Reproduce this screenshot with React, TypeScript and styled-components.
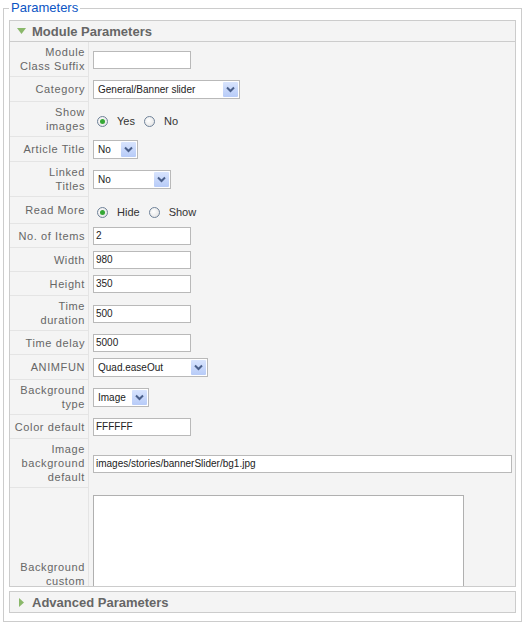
import React from 'react';
import styled, {createGlobalStyle} from 'styled-components';

const GlobalStyle = createGlobalStyle`
  html, body {
    margin: 0;
    padding: 0;
    background: #fff;
  }
  body {
    font-family: "Liberation Sans", Arial, Helvetica, sans-serif;
    font-size: 11px;
    color: #333;
  }
`;

const Page = styled.div`
  width: 524px;
  padding: 1px 3px 0 3px;
  box-sizing: border-box;
`;

const Fieldset = styled.fieldset`
  margin: 0;
  width: 519px;
  box-sizing: border-box;
  border: 1px solid #cccccc;
  padding: 5px 5px 8px 5px;
`;

const Legend = styled.legend`
  color: #0b55c4;
  font-size: 13px;
  line-height: 14px;
  padding: 0 2px;
  margin-left: 0;
`;

const Panel = styled.div`
  border: 1px solid #cccccc;
  background: #f4f4f4;
  & + & {
    margin-top: 4px;
  }
`;

const PanelHeader = styled.div<{$open?: boolean}>`
  display: flex;
  align-items: center;
  gap: 6px;
  height: 20px;
  padding-left: 7px;
  font-size: 13px;
  font-weight: bold;
  color: #666;
  background: #f4f4f4;
  border-bottom: ${({$open}) => ($open ? '1px solid #cccccc' : 'none')};
`;

const Toggle = styled.svg`
  flex: none;
`;

const PanelContent = styled.div`
  height: 544px;
  overflow: hidden;
`;

const Row = styled.div`
  display: flex;
  align-items: stretch;
`;

const Key = styled.div<{$first?: boolean}>`
  flex: none;
  width: 75px;
  padding: 3px 3px 3px 0;
  text-align: right;
  color: #666;
  line-height: 14px;
  letter-spacing: 0.6px;
  border-right: 1px solid #e4e4e4;
  border-bottom: 1px solid #e4e4e4;
  display: flex;
  align-items: center;
  justify-content: flex-end;
  white-space: nowrap;
`;

const Value = styled.div`
  flex: 1;
  display: flex;
  align-items: center;
  padding: 3px 0 3px 4px;
`;

const TextInput = styled.div<{$w: number}>`
  width: ${({$w}) => $w}px;
  height: 18px;
  box-sizing: border-box;
  border: 1px solid #b9b9b9;
  background: #fff;
  padding: 0 2px;
  line-height: 16px;
  font-size: 10px;
  color: #222;
  white-space: nowrap;
  overflow: hidden;
`;

const Select = styled.div<{$w: number}>`
  width: ${({$w}) => $w}px;
  height: 19px;
  box-sizing: border-box;
  border: 1px solid #b9b9b9;
  background: #fff;
  display: flex;
  align-items: center;
  justify-content: space-between;
  padding: 0 1px 0 4px;
  font-size: 10px;
  color: #222;
`;

const Arrow = styled.span`
  width: 15px;
  height: 15px;
  background: linear-gradient(#d8e4fd, #b7cbf8);
  border-radius: 1px;
  display: flex;
  align-items: center;
  justify-content: center;
`;

const RadioGroup = styled.div`
  display: flex;
  align-items: center;
  height: 21px;
  margin-left: 4px;
`;

const RadioDot = styled.span<{$on?: boolean}>`
  flex: none;
  width: 11px;
  height: 11px;
  box-sizing: border-box;
  border-radius: 50%;
  border: 1px solid #6f8299;
  background: radial-gradient(circle at 40% 40%, #ffffff, #dedede);
  display: inline-flex;
  align-items: center;
  justify-content: center;
  margin-right: 9px;
  margin-top: 3px;
  &::after {
    content: '';
    width: 5px;
    height: 5px;
    border-radius: 50%;
    background: ${({$on}) => ($on ? '#35a835' : 'transparent')};
  }
`;

const RadioLabel = styled.span`
  margin-right: 9px;
  margin-top: 3px;
  color: #333;
`;

const TextArea = styled.div`
  width: 371px;
  height: 158px;
  margin: 4px 0;
  box-sizing: border-box;
  border: 1px solid #b0b0b0;
  background: #fff;
`;

const Chevron = () => (
  <svg width="9" height="7" viewBox="0 0 9 7">
    <path d="M1 1.5 L4.5 5 L8 1.5" fill="none" stroke="#4a5f8a" strokeWidth="2" />
  </svg>
);

const Dropdown = ({w, children}: {w: number; children: React.ReactNode}) => (
  <Select $w={w}>
    <span>{children}</span>
    <Arrow>
      <Chevron />
    </Arrow>
  </Select>
);

const Radios = ({options, selected}: {options: string[]; selected: number}) => (
  <RadioGroup>
    {options.map((o, i) => (
      <React.Fragment key={o}>
        <RadioDot $on={i === selected} />
        <RadioLabel>{o}</RadioLabel>
      </React.Fragment>
    ))}
  </RadioGroup>
);

const Param = ({label, children}: {label: React.ReactNode; children: React.ReactNode}) => (
  <Row>
    <Key>
      <span>{label}</span>
    </Key>
    <Value>{children}</Value>
  </Row>
);

const DownTriangle = () => (
  <Toggle width="9" height="7" viewBox="0 0 9 7">
    <path d="M0 0 L9 0 L4.5 6 Z" fill="#8ab86a" />
  </Toggle>
);

const RightTriangle = () => (
  <Toggle width="9" height="9" viewBox="0 0 9 9">
    <path d="M2 0 L7 4.5 L2 9 Z" fill="#8ab86a" />
  </Toggle>
);

export default function App() {
  return (
    <Page>
      <GlobalStyle />
      <Fieldset>
        <Legend>Parameters</Legend>
        <Panel>
          <PanelHeader $open>
            <DownTriangle />
            Module Parameters
          </PanelHeader>
          <PanelContent>
            <Param label={<>Module<br />Class Suffix</>}>
              <TextInput $w={98} />
            </Param>
            <Param label="Category">
              <Dropdown w={147}>General/Banner slider</Dropdown>
            </Param>
            <Param label={<>Show<br />images</>}>
              <Radios options={['Yes', 'No']} selected={0} />
            </Param>
            <Param label="Article Title">
              <Dropdown w={45}>No</Dropdown>
            </Param>
            <Param label={<>Linked<br />Titles</>}>
              <Dropdown w={78}>No</Dropdown>
            </Param>
            <Param label="Read More">
              <Radios options={['Hide', 'Show']} selected={0} />
            </Param>
            <Param label="No. of Items">
              <TextInput $w={98}>2</TextInput>
            </Param>
            <Param label="Width">
              <TextInput $w={98}>980</TextInput>
            </Param>
            <Param label="Height">
              <TextInput $w={98}>350</TextInput>
            </Param>
            <Param label={<>Time<br />duration</>}>
              <TextInput $w={98}>500</TextInput>
            </Param>
            <Param label="Time delay">
              <TextInput $w={98}>5000</TextInput>
            </Param>
            <Param label="ANIMFUN">
              <Dropdown w={115}>Quad.easeOut</Dropdown>
            </Param>
            <Param label={<>Background<br />type</>}>
              <Dropdown w={56}>Image</Dropdown>
            </Param>
            <Param label="Color default">
              <TextInput $w={98}>FFFFFF</TextInput>
            </Param>
            <Param label={<>Image<br />background<br />default</>}>
              <TextInput $w={419}>images/stories/bannerSlider/bg1.jpg</TextInput>
            </Param>
            <Param label={<>Background<br />custom</>}>
              <TextArea />
            </Param>
          </PanelContent>
        </Panel>
        <Panel>
          <PanelHeader>
            <RightTriangle />
            Advanced Parameters
          </PanelHeader>
        </Panel>
      </Fieldset>
    </Page>
  );
}
